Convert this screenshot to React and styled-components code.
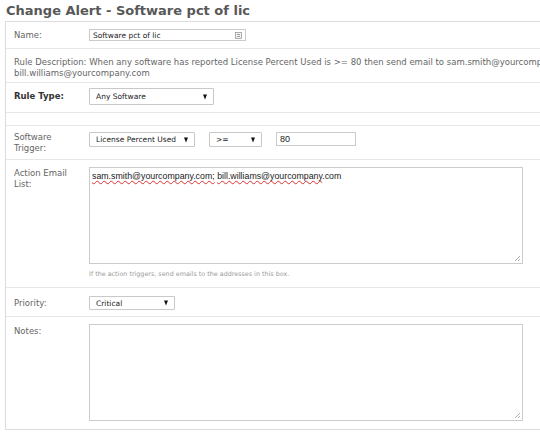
import React from "react";
import styled, { createGlobalStyle } from "styled-components";

const Global = createGlobalStyle`
  html, body { margin: 0; padding: 0; overflow: hidden; background: #fff; }
  body { font-family: "DejaVu Sans", Verdana, sans-serif; color: #555; }
`;

const Page = styled.div`
  width: 700px;
`;

const Title = styled.h1`
  margin: 0;
  height: 21px;
  box-sizing: border-box;
  padding: 4px 0 0 6px;
  font-family: "DejaVu Sans", Verdana, sans-serif;
  font-weight: bold;
  font-size: 13px;
  line-height: 13px;
  color: #585858;
  white-space: nowrap;
`;

const Panel = styled.div`
  margin-left: 5px;
  border: 1px solid #dcdcdc;
  border-right: none;
`;

const Row = styled.div`
  display: flex;
  align-items: flex-start;
  box-sizing: border-box;
  height: ${(p) => p.$h}px;
  padding: ${(p) => p.$pt || 0}px 0 0 8px;
  border-bottom: ${(p) => (p.$last ? "none" : "1px solid #e6e6e6")};
`;

const Label = styled.div`
  width: 65px;
  margin-right: 10px;
  flex: none;
  font-size: 8.5px;
  line-height: ${(p) => p.$lh || 11}px;
  padding-top: ${(p) => p.$pt || 0}px;
  color: ${(p) => (p.$bold ? "#333" : "#666")};
  font-weight: ${(p) => (p.$bold ? "bold" : "normal")};
`;

const Field = styled.div`
  display: flex;
  flex-direction: column;
`;

const Inline = styled.div`
  display: flex;
  align-items: flex-start;
  gap: 14px;
`;

const Description = styled.div`
  font-size: 8.5px;
  line-height: 10.5px;
  color: #666;
  white-space: nowrap;
`;

const TextInput = styled.div`
  position: relative;
  box-sizing: border-box;
  width: ${(p) => p.$w}px;
  height: ${(p) => p.$h}px;
  border: 1px solid #cbcbcb;
  background: #fff;
  padding-left: 3px;
  display: flex;
  align-items: center;
  font-family: ${(p) =>
    p.$arial ? `"Liberation Sans", Arial, sans-serif` : `"DejaVu Sans", Verdana, sans-serif`};
  font-size: ${(p) => (p.$arial ? 9 : 7.5)}px;
  color: #222;
`;

const AutoIcon = styled.svg`
  position: absolute;
  right: 3px;
  top: 2px;
`;

const Select = styled.div`
  position: relative;
  box-sizing: border-box;
  width: ${(p) => p.$w}px;
  height: ${(p) => p.$h}px;
  border: 1px solid #c9c9c9;
  border-radius: 1px;
  background: #fff;
  padding-left: 6px;
  display: flex;
  align-items: center;
  font-size: 7.5px;
  color: #222;
  white-space: nowrap;
`;

const Arrow = styled.span`
  position: absolute;
  right: 6px;
  top: 50%;
  transform: translateY(-50%);
  width: 0;
  height: 0;
  border-left: 2.5px solid transparent;
  border-right: 2.5px solid transparent;
  border-top: 5px solid #111;
`;

const Area = styled.div`
  position: relative;
  box-sizing: border-box;
  width: 434px;
  height: ${(p) => p.$h}px;
  border: 1px solid #cccccc;
  background: #fff;
  padding: 3px 2px;
  font-family: "Liberation Sans", Arial, sans-serif;
  font-size: 8.8px;
  line-height: 11px;
  color: #222;
`;

const Misspelled = styled.span`
  text-decoration: underline wavy #e03030;
  text-decoration-thickness: 1px;
  text-decoration-skip-ink: none;
  text-underline-offset: 1px;
`;

const Grip = styled.svg`
  position: absolute;
  right: 1px;
  bottom: 1px;
`;

const Help = styled.div`
  margin-top: 5px;
  font-size: 6.4px;
  line-height: 10px;
  color: #9a9a9a;
  white-space: nowrap;
`;

const ResizeGrip = () => (
  <Grip width="8" height="8" viewBox="0 0 8 8">
    <line x1="7" y1="2" x2="2" y2="7" stroke="#999" strokeWidth="0.8" />
    <line x1="7" y1="5" x2="5" y2="7" stroke="#999" strokeWidth="0.8" />
  </Grip>
);

const SelectBox = ({ w, h, children }) => (
  <Select $w={w} $h={h}>
    {children}
    <Arrow />
  </Select>
);

export default function App() {
  return (
    <Page>
      <Global />
      <Title>Change Alert - Software pct of lic</Title>
      <Panel>
        <Row $h={27} $pt={7}>
          <Label $lh={12}>Name:</Label>
          <TextInput $w={157} $h={12}>
            Software pct of lic
            <AutoIcon width="7" height="7" viewBox="0 0 7 7">
              <rect x="0.5" y="0.5" width="6" height="6" fill="#f2f2f2" stroke="#999" strokeWidth="0.8" />
              <line x1="2" y1="2.5" x2="5" y2="2.5" stroke="#888" strokeWidth="0.8" />
              <line x1="2" y1="4.5" x2="5" y2="4.5" stroke="#888" strokeWidth="0.8" />
            </AutoIcon>
          </TextInput>
        </Row>
        <Row $h={34} $pt={8}>
          <Description>
            Rule Description: When any software has reported License Percent Used is &gt;= 80 then send email to sam.smith@yourcompany.com
            <br />
            bill.williams@yourcompany.com
          </Description>
        </Row>
        <Row $h={30} $pt={5}>
          <Label $bold $lh={17}>Rule Type:</Label>
          <SelectBox w={125} h={17}>Any Software</SelectBox>
        </Row>
        <Row $h={13} />
        <Row $h={34} $pt={6}>
          <Label>Software Trigger:</Label>
          <Inline>
            <SelectBox w={106} h={15}>License Percent Used</SelectBox>
            <SelectBox w={53} h={15}>&gt;=</SelectBox>
            <TextInput $w={80} $h={14} $arial>80</TextInput>
          </Inline>
        </Row>
        <Row $h={128} $pt={7}>
          <Label $pt={1}>Action Email List:</Label>
          <Field>
            <Area $h={97}>
              <Misspelled>sam.smith@yourcompany.com;</Misspelled>{" "}
              <Misspelled>bill.williams@yourcompany</Misspelled>.com
              <ResizeGrip />
            </Area>
            <Help>If the action triggers, send emails to the addresses in this box.</Help>
          </Field>
        </Row>
        <Row $h={29} $pt={8}>
          <Label $lh={14}>Priority:</Label>
          <SelectBox w={86} h={14}>Critical</SelectBox>
        </Row>
        <Row $h={112} $pt={7} $last>
          <Label $pt={2}>Notes:</Label>
          <Area $h={97}>
            <ResizeGrip />
          </Area>
        </Row>
      </Panel>
    </Page>
  );
}
